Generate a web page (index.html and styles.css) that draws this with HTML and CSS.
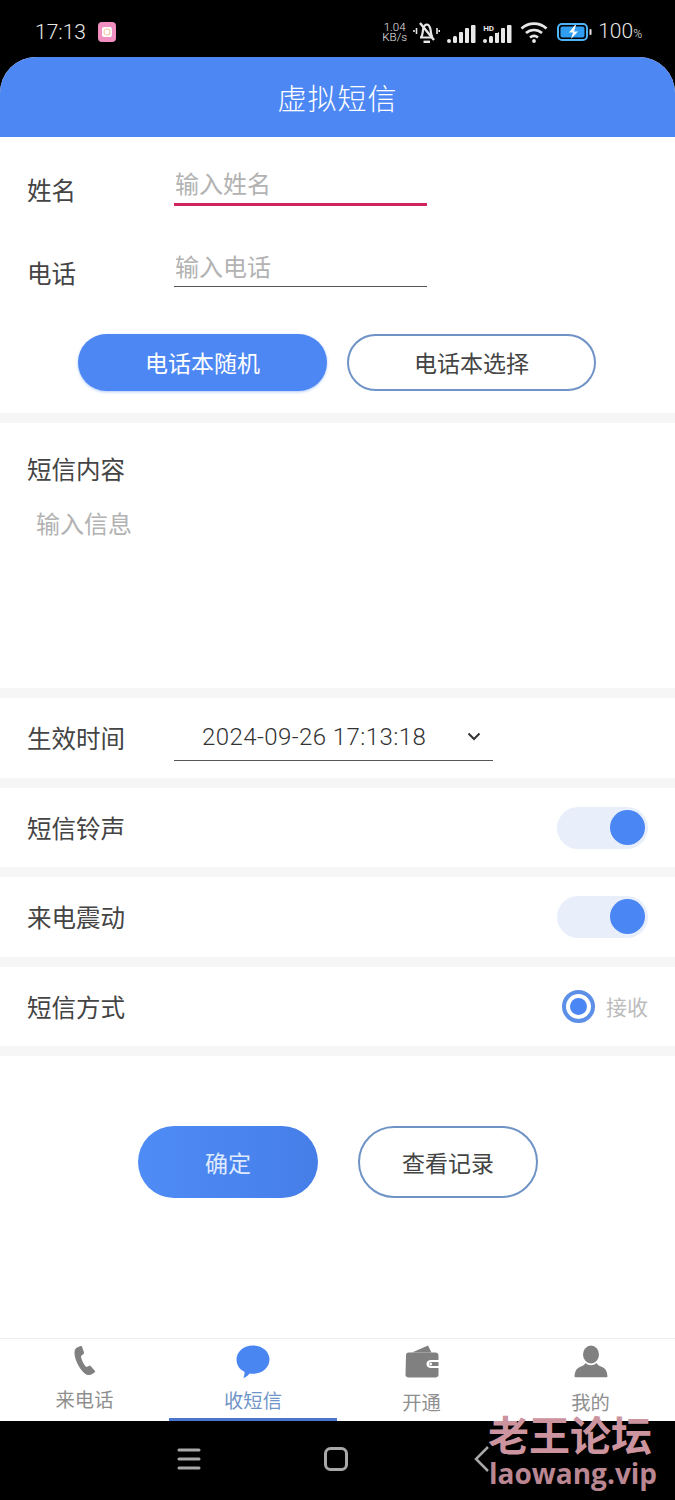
FILE: index.html
```html
<!DOCTYPE html>
<html lang="zh">
<head>
<meta charset="utf-8">
<title>虚拟短信</title>
<link rel="stylesheet" href="styles.css">
</head>
<body>
<div class="phone">
  <div class="status">
    <div class="status-left">
      <span class="clock">17:13</span>
      <svg class="cam" width="18" height="20" viewBox="0 0 18 20"><rect width="18" height="20" rx="4" fill="#f08fc0"/><rect x="4" y="5" width="10" height="10" rx="2" fill="#fff"/><circle cx="9" cy="10" r="3" fill="none" stroke="#f4c9a8" stroke-width="1.200"/></svg>
    </div>
    <div class="status-right">
      <span class="speed"><span>1.04</span><span>KB/s</span></span>
      <svg class="bell" width="27" height="24" viewBox="0 0 27 24" fill="none" stroke="#e8e8e8"><path d="M7 17.500h13M8 17c2.200-2 1.300-5 2.300-8.500.7-2.600 2.200-4 3.500-4s2.800 1.400 3.500 4c1 3.500.1 6.500 2.300 8.500" stroke-width="2.200"/><path d="M10.500 21.800h6.500" stroke-width="2.400"/><path d="M7 3l14 17" stroke-width="2.400"/><path d="M3.500 8v6M1 10v2M24 8v6M26.300 10v2" stroke-width="1.600"/></svg>
      <svg class="bars" width="29" height="18" viewBox="0 0 29 18" fill="#e8e8e8"><rect x="0" y="14" width="4" height="4" rx="2"/><rect x="6" y="11" width="4" height="7" rx="1.500"/><rect x="12" y="7" width="4" height="11" rx="1"/><rect x="18" y="3" width="4" height="15" rx="1"/><rect x="24" y="0" width="4.500" height="18" rx="1"/></svg>
      <span class="sim">
        <svg width="29" height="18" viewBox="0 0 29 18" fill="#e8e8e8"><rect x="0" y="14" width="4" height="4" rx="2"/><rect x="6" y="11" width="4" height="7" rx="1.500"/><rect x="12" y="7" width="4" height="11" rx="1"/><rect x="18" y="3" width="4" height="15" rx="1"/><rect x="24" y="0" width="4.500" height="18" rx="1"/></svg>
        <span class="hd">HD</span>
      </span>
      <svg class="wifi" width="28" height="22" viewBox="0 0 28 22" fill="none" stroke="#e8e8e8" stroke-width="2.700"><path d="M1.500 7.500C8.500 1 19.500 1 26.500 7.500"/><path d="M6 12c4.500-4 11.500-4 16 0"/><path d="M10 16.500c2.500-2 5.500-2 8 0"/><circle cx="14" cy="20" r="1.900" fill="#e8e8e8" stroke="none"/></svg>
      <svg class="batt" width="35" height="18" viewBox="0 0 35 18"><rect x="1" y="1" width="29" height="16" rx="4" fill="none" stroke="#4fb4f5" stroke-width="2"/><rect x="3.500" y="3.500" width="24" height="11" rx="2" fill="#2f9df0"/><path d="M18 2l-6 7.500h4L14 16l7-7.500h-4l2-6.500z" fill="#fff"/><rect x="32.500" y="6" width="2" height="6" rx="1" fill="#e8e8e8"/></svg>
      <span class="pct">100<small>%</small></span>
    </div>
  </div>

  <main class="app">
    <header class="title">虚拟短信</header>

    <section class="contact">
      <div class="field">
        <label class="field-label">姓名</label>
        <div class="input active">输入姓名</div>
      </div>
      <div class="field field-second">
        <label class="field-label">电话</label>
        <div class="input">输入电话</div>
      </div>
      <div class="pair">
        <button class="pill solid">电话本随机</button>
        <button class="pill outline">电话本选择</button>
      </div>
    </section>

    <section class="message">
      <div class="row-label">短信内容</div>
      <div class="hint">输入信息</div>
    </section>

    <section class="row row-time">
      <span class="row-label">生效时间</span>
      <div class="date">
        <span>2024-09-26 17:13:18</span>
        <svg width="14" height="9" viewBox="0 0 14 9" fill="none" stroke="#333" stroke-width="2"><path d="M1.500 1.500L7 7l5.500-5.500"/></svg>
      </div>
    </section>

    <section class="row row-short">
      <span class="row-label">短信铃声</span>
      <span class="switch"><span class="knob"></span></span>
    </section>

    <section class="row">
      <span class="row-label">来电震动</span>
      <span class="switch"><span class="knob"></span></span>
    </section>

    <section class="row row-short">
      <span class="row-label">短信方式</span>
      <span class="radio-wrap"><span class="radio"><span class="dot"></span></span><span class="radio-text">接收</span></span>
    </section>

    <div class="actions">
      <button class="pill big solid-grad">确定</button>
      <button class="pill big outline">查看记录</button>
    </div>

    <nav class="tabs">
      <div class="tab">
        <svg class="tab-icon" width="36" height="36" viewBox="0 0 36 36"><path d="M10 3.500l3.500-1.500c.8-.3 1.300 0 1.500.6l2 6c.2.700 0 1.100-.5 1.500l-2.500 1.800c-.3 2 3 9.500 5.500 11l2.800-1.200c.6-.2 1.100 0 1.500.5l4 4.500c.5.600.4 1.100-.1 1.500l-2.400 1.800c-2.500 1.600-5 1.500-7.500-.5C12 25 7 14 7.500 8c.2-2 1-3.600 2.500-4.500z" fill="#808080"/></svg>
        <span class="tab-text t1">来电话</span>
      </div>
      <div class="tab tab-on">
        <svg class="tab-icon" width="36" height="36" viewBox="0 0 36 36"><path d="M18 1.500c9.300 0 16.500 6.200 16.500 14 0 8.200-7.600 14.300-16.500 14.300-1.200 0-2.300-.1-3.300-.3-1.300 1.800-4 3.700-6.500 4.700 1-2 1.500-4.300 1.300-6.400C4.700 25.600 1.500 21 1.500 15.500c0-7.800 7.200-14 16.500-14z" fill="#4a86f2"/></svg>
        <span class="tab-text t2">收短信</span>
      </div>
      <div class="tab">
        <svg class="tab-icon" width="36" height="36" viewBox="0 0 36 36"><path d="M8 8.500L24 1.500l3.500 7z" fill="#808080"/><path d="M2 11c0-1.400 1-2.500 2.500-2.500h27C33 8.500 34.500 9.500 34.500 11v5H27c-2.500 0-4.500 1.500-4.500 4s2 4 4.500 4h7.500v7c0 1.500-1.500 2.500-3 2.500h-27C3 33.500 1.500 32.500 1.500 31z" fill="#808080"/><path d="M27 18h7.500v4H27a2 2 0 0 1 0-4z" fill="#808080"/><circle cx="26.800" cy="20" r="1.300" fill="#fff"/></svg>
        <span class="tab-text t3">开通</span>
      </div>
      <div class="tab">
        <svg class="tab-icon" width="36" height="36" viewBox="0 0 36 36"><ellipse cx="18" cy="10.500" rx="8" ry="9" fill="#808080"/><path d="M12.500 19c1.500 1.500 3.500 2.200 5.500 2.200s4-.7 5.500-2.200c1 2 2.500 2.800 5 3.700 3.500 1.300 5.500 3.500 6 9.800-.1.500-.4.800-1 .8H2.500c-.6 0-.9-.3-1-.8.500-6.300 2.500-8.500 6-9.800 2.500-.9 4-1.700 5-3.700z" fill="#808080"/></svg>
        <span class="tab-text t4">我的</span>
      </div>
    </nav>
  </main>

  <div class="navbar">
    <svg width="26" height="24" viewBox="0 0 26 24" stroke="#a8a8a8" stroke-width="3" stroke-linecap="round"><path d="M3 3h20M3 12h20M3 21h20"/></svg>
    <svg width="26" height="26" viewBox="0 0 26 26" fill="none" stroke="#a8a8a8" stroke-width="3"><rect x="2.500" y="2.500" width="21" height="21" rx="5"/></svg>
    <svg class="back" width="18" height="28" viewBox="0 0 18 28" fill="none" stroke="#a8a8a8" stroke-width="2.500"><path d="M15 2L3 14l12 12"/></svg>
  </div>

  <div class="mark">
    <div class="mark-cn">老王论坛</div>
    <div class="mark-en">laowang.vip</div>
  </div>
</div>
</body>
</html>
```
FILE: styles.css
```css
* { box-sizing: border-box; }
html, body { margin: 0; padding: 0; }
body {
  width: 675px;
  height: 1500px;
  overflow: hidden;
  background: #000;
  font-family: "Noto Sans CJK SC", "Noto Sans", sans-serif;
  color: #3a3a3a;
}
.phone { position: relative; width: 675px; height: 1500px; display: flex; flex-direction: column; }

.status {
  height: 57px;
  flex: none;
  padding: 19px 33px 0 35px;
  display: flex;
  justify-content: space-between;
  align-items: flex-start;
  color: #e8e8e8;
}
.status-left { display: flex; align-items: center; gap: 12px; height: 26px; }
.clock { font-family: "Roboto", sans-serif; font-size: 21px; font-weight: 300; line-height: 26px; }
.status-right { display: flex; align-items: center; height: 26px; }
.speed { display: flex; flex-direction: column; align-items: center; font-family: "Roboto", sans-serif; font-size: 11.5px; line-height: 10.5px; font-weight: 300; width: 25px; margin-right: 6px; }
.bell { margin-right: 7px; }
.bars { margin-right: 7px; margin-top: 3px; }
.sim { position: relative; display: block; height: 18px; margin-right: 8px; margin-top: 3px; }
.sim svg { display: block; }
.hd { position: absolute; left: 0; top: -1px; width: 15px; font-family: "Roboto", sans-serif; font-size: 8px; font-weight: 700; line-height: 9px; background: #000; }
.wifi { margin-right: 9px; }
.batt { margin-right: 6px; }
.pct { font-family: "Roboto", sans-serif; font-size: 21px; font-weight: 300; line-height: 26px; }
.pct small { font-size: 12px; }

.app {
  flex: none;
  height: 1364px;
  background: #fff;
  border-radius: 36px 36px 0 0;
  overflow: hidden;
  display: flex;
  flex-direction: column;
}
.title {
  height: 80px;
  flex: none;
  background: #4d87f4;
  color: #fff;
  font-size: 29px;
  font-weight: 300;
  line-height: 80px;
  text-align: center;
  letter-spacing: 1px;
}

.contact { height: 286px; flex: none; border-bottom: 10px solid #f6f6f6; padding: 24px 0 0 27px; }
.field { display: flex; height: 44px; }
.field-second { margin-top: 38px; }
.field-label { width: 147px; font-size: 24.5px; line-height: 34px; padding-top: 12px; height: 44px; color: #444; }
.field-second .field-label { padding-top: 13px; height: 45px; }
.input {
  width: 253px;
  height: 44px;
  font-size: 24px;
  line-height: 43px;
  color: #b2b2b2;
  padding-left: 1px;
  border-bottom: 1px solid #555;
}
.field-second .input { line-height: 45px; }
.input.active { height: 45px; border-bottom: 3px solid #d0245e; }

.pair { margin-top: 47px; padding-left: 51px; display: flex; gap: 20px; }
.pill { display: block; font-family: inherit; border-radius: 40px; padding: 0; margin: 0; text-align: center; }
.pair .pill { width: 249px; height: 57px; font-size: 23px; line-height: 55px; }
.solid { background: #4d87f4; color: #fff; border: 0; box-shadow: 0 1px 3px rgba(77,135,244,.45); }
.outline { background: #fff; color: #444; border: 2px solid #6f93c6; }
.pair .outline { line-height: 51px; }

.message { height: 275px; flex: none; border-bottom: 10px solid #f6f6f6; padding: 26px 27px 0; }
.row-label { font-size: 24.5px; line-height: 40px; color: #444; }
.hint { margin: 14px 0 0 9px; font-size: 24px; line-height: 40px; color: #b2b2b2; }

.row {
  height: 90px;
  flex: none;
  border-bottom: 10px solid #f6f6f6;
  padding: 0 27px;
  display: flex;
  align-items: center;
  justify-content: space-between;
}
.row-short { height: 89px; }
.row-time { justify-content: flex-start; }
.row-time .row-label { width: 147px; }

.date {
  width: 319px;
  height: 48px;
  margin-top: -2px;
  border-bottom: 1px solid #555;
  padding: 0 12px 0 28px;
  display: flex;
  align-items: center;
  justify-content: space-between;
  font-family: "Roboto", sans-serif;
  font-size: 24px;
  font-weight: 300;
  color: #333;
  letter-spacing: .43px;
}

.switch {
  position: relative;
  display: block;
  width: 91px;
  height: 42px;
  border-radius: 21px;
  background: #e8effb;
}
.knob { position: absolute; right: 3px; top: 3px; width: 35px; height: 35px; border-radius: 50%; background: #4a86f4; }

.radio-wrap { display: flex; align-items: center; gap: 11px; }
.radio { width: 33px; height: 33px; border-radius: 50%; border: 4px solid #5b8fe8; background: #fff; display: flex; align-items: center; justify-content: center; }
.dot { width: 17px; height: 17px; border-radius: 50%; background: #4a86f4; }
.radio-text { font-size: 21px; line-height: 28px; margin-bottom: 2px; color: #bcbcbc; }

.actions { margin-top: 70px; padding-left: 138px; display: flex; gap: 40px; flex: none; }
.pill.big { width: 180px; height: 72px; font-size: 23px; }
.solid-grad { background: linear-gradient(90deg, #4f8cf6, #467ee8); color: #dfeaff; border: 0; }

.tabs {
  margin-top: 140px;
  height: 83px;
  flex: none;
  border-top: 1px solid #ececec;
  display: grid;
  grid-template-columns: 169px 168px 169px 169px;
}
.tab { position: relative; display: flex; flex-direction: column; align-items: center; }
.tab-on::after { content: ""; position: absolute; left: 0; right: 0; bottom: 0; height: 3px; background: #4a76d0; }
.tab-icon { display: block; margin-top: 5px; flex: none; }
.tab-text { font-size: 19.3px; line-height: 28px; color: #8f8f8f; margin-top: 6px; }
.t1 { margin-top: 5px; }
.t2 { color: #6f95c8; }
.t3, .t4 { margin-top: 8px; }

.navbar {
  flex: 1;
  display: flex;
  align-items: center;
  gap: 121px;
  padding: 0 0 4px 176px;
}
.back { margin-left: 3px; }

.mark { position: absolute; left: 488px; top: 1411px; width: 172px; }
.mark-cn { font-size: 41px; font-weight: 700; line-height: 44px; color: #cb949f; white-space: nowrap; }
.mark-en { font-family: "Open Sans", sans-serif; font-size: 28px; font-weight: 700; line-height: 36px; margin-left: 1px; color: #ba8691; white-space: nowrap; }
```
